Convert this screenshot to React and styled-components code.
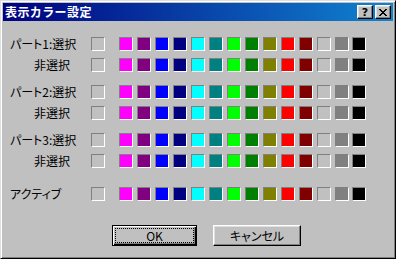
import styled, { createGlobalStyle } from "styled-components";

const GlobalStyle = createGlobalStyle`
  html, body {
    margin: 0;
    padding: 0;
    background: #c0c0c0;
  }
  body {
    font-family: "Noto Sans CJK JP", "Noto Sans", sans-serif;
    font-size: 12px;
    color: #000;
  }
`;

const palette = [
  "#ff00ff",
  "#800080",
  "#0000ff",
  "#000080",
  "#00ffff",
  "#008080",
  "#00ff00",
  "#008000",
  "#808000",
  "#ff0000",
  "#800000",
  "#c0c0c0",
  "#808080",
  "#000000",
];

const groups = [
  [
    { label: "パート1:選択" },
    { label: "非選択" },
  ],
  [
    { label: "パート2:選択" },
    { label: "非選択" },
  ],
  [
    { label: "パート3:選択" },
    { label: "非選択" },
  ],
];

function ColorRow({ label, left }) {
  return (
    <Row>
      <Label $left={left}>{label}</Label>
      <CurrentBox />
      <Swatches>
        {palette.map((c) => (
          <Swatch key={c} $color={c} />
        ))}
      </Swatches>
    </Row>
  );
}

function App() {
  return (
    <>
      <GlobalStyle />
      <Window>
        <TitleBar>
          <Title>表示カラー設定</Title>
          <TitleButtons>
            <TitleButton>?</TitleButton>
            <TitleButton>
              <svg width="8" height="7" viewBox="0 0 8 7">
                <path
                  d="M0 0h2v1h1v1h2V1h1V0h2v1H7v1H6v1H5v1h1v1h1v1h1v1H6V6H5V5H3v1H2v1H0V6h1V5h1V4h1V3H2V2H1V1H0z"
                  fill="#000"
                />
              </svg>
            </TitleButton>
          </TitleButtons>
        </TitleBar>
        <Body>
          {groups.map((rows, i) => (
            <Group key={i}>
              {rows.map((r, j) => (
                <ColorRow key={j} label={r.label} />
              ))}
            </Group>
          ))}
          <ActiveGroup>
            <ColorRow label="アクティブ" left />
          </ActiveGroup>
          <Buttons>
            <Button $default $width={85}>
              <Focus>OK</Focus>
            </Button>
            <Button $width={88}>
              <Focus $hidden>キャンセル</Focus>
            </Button>
          </Buttons>
        </Body>
      </Window>
    </>
  );
}

export default App;

const Window = styled.div`
  width: 396px;
  height: 259px;
  box-sizing: border-box;
  background: #c0c0c0;
  border: 1px solid;
  border-color: #dfdfdf #000 #000 #dfdfdf;
  box-shadow: inset 1px 1px #fff, inset -1px -1px #808080;
  padding: 2px;
  display: flex;
  flex-direction: column;
`;

const TitleBar = styled.div`
  height: 18px;
  display: flex;
  align-items: center;
  justify-content: space-between;
  padding: 0 2px 0 2px;
  background: linear-gradient(to right, #000080, #1084d0);
`;

const Title = styled.div`
  color: #fff;
  font-weight: bold;
  font-size: 12px;
  line-height: 18px;
  letter-spacing: 0.4px;
`;

const TitleButtons = styled.div`
  display: flex;
  gap: 2px;
`;

const TitleButton = styled.div`
  width: 16px;
  height: 14px;
  box-sizing: border-box;
  background: #c0c0c0;
  border: 1px solid;
  border-color: #fff #000 #000 #fff;
  box-shadow: inset -1px -1px #808080, inset 1px 1px #dfdfdf;
  display: flex;
  align-items: center;
  justify-content: center;
  font-family: "DejaVu Sans", sans-serif;
  font-weight: bold;
  font-size: 11px;
  line-height: 1;
`;

const Body = styled.div`
  flex: 1;
  display: flex;
  flex-direction: column;
  padding: 16px 0 0 7px;
`;

const Group = styled.div`
  display: flex;
  flex-direction: column;
  gap: 7px;
  & + & {
    margin-top: 13px;
  }
`;

const ActiveGroup = styled.div`
  margin-top: 19px;
`;

const Row = styled.div`
  display: flex;
  align-items: center;
  height: 14px;
`;

const Label = styled.div`
  width: 60px;
  text-align: ${(p) => (p.$left ? "left" : "right")};
  white-space: nowrap;
  font-feature-settings: "palt";
  line-height: 14px;
`;

const CurrentBox = styled.div`
  width: 14px;
  height: 14px;
  box-sizing: border-box;
  margin-left: 21px;
  background: #c0c0c0;
  border: 1px solid;
  border-color: #808080 #fff #fff #808080;
`;

const Swatches = styled.div`
  display: flex;
  margin-left: 14px;
`;

const Swatch = styled.div`
  width: 14px;
  height: 14px;
  box-sizing: border-box;
  background: ${(p) => p.$color};
  border: 1px solid;
  border-color: #808080 #fff #fff #808080;
  & + & {
    margin-left: 4px;
  }
  &:nth-child(even) {
    margin-left: 3px;
  }
`;

const Buttons = styled.div`
  display: flex;
  gap: 16px;
  margin-top: 24px;
  padding-left: 102px;
`;

const Button = styled.div`
  width: ${(p) => p.$width}px;
  height: 21px;
  box-sizing: border-box;
  background: #c0c0c0;
  padding: 3px;
  border: 1px solid ${(p) => (p.$default ? "#000" : "transparent")};
  border-color: ${(p) => (p.$default ? "#000" : "#fff #000 #000 #fff")};
  box-shadow: ${(p) =>
    p.$default
      ? "inset 1px 1px #fff, inset -1px -1px #000, inset -2px -2px #808080"
      : "inset -1px -1px #808080, inset 1px 1px #dfdfdf"};
  display: flex;
`;

const Focus = styled.div`
  flex: 1;
  display: flex;
  align-items: center;
  justify-content: center;
  outline: ${(p) => (p.$hidden ? "none" : "1px dotted #000")};
  font-feature-settings: "palt";
  line-height: 1;
`;
